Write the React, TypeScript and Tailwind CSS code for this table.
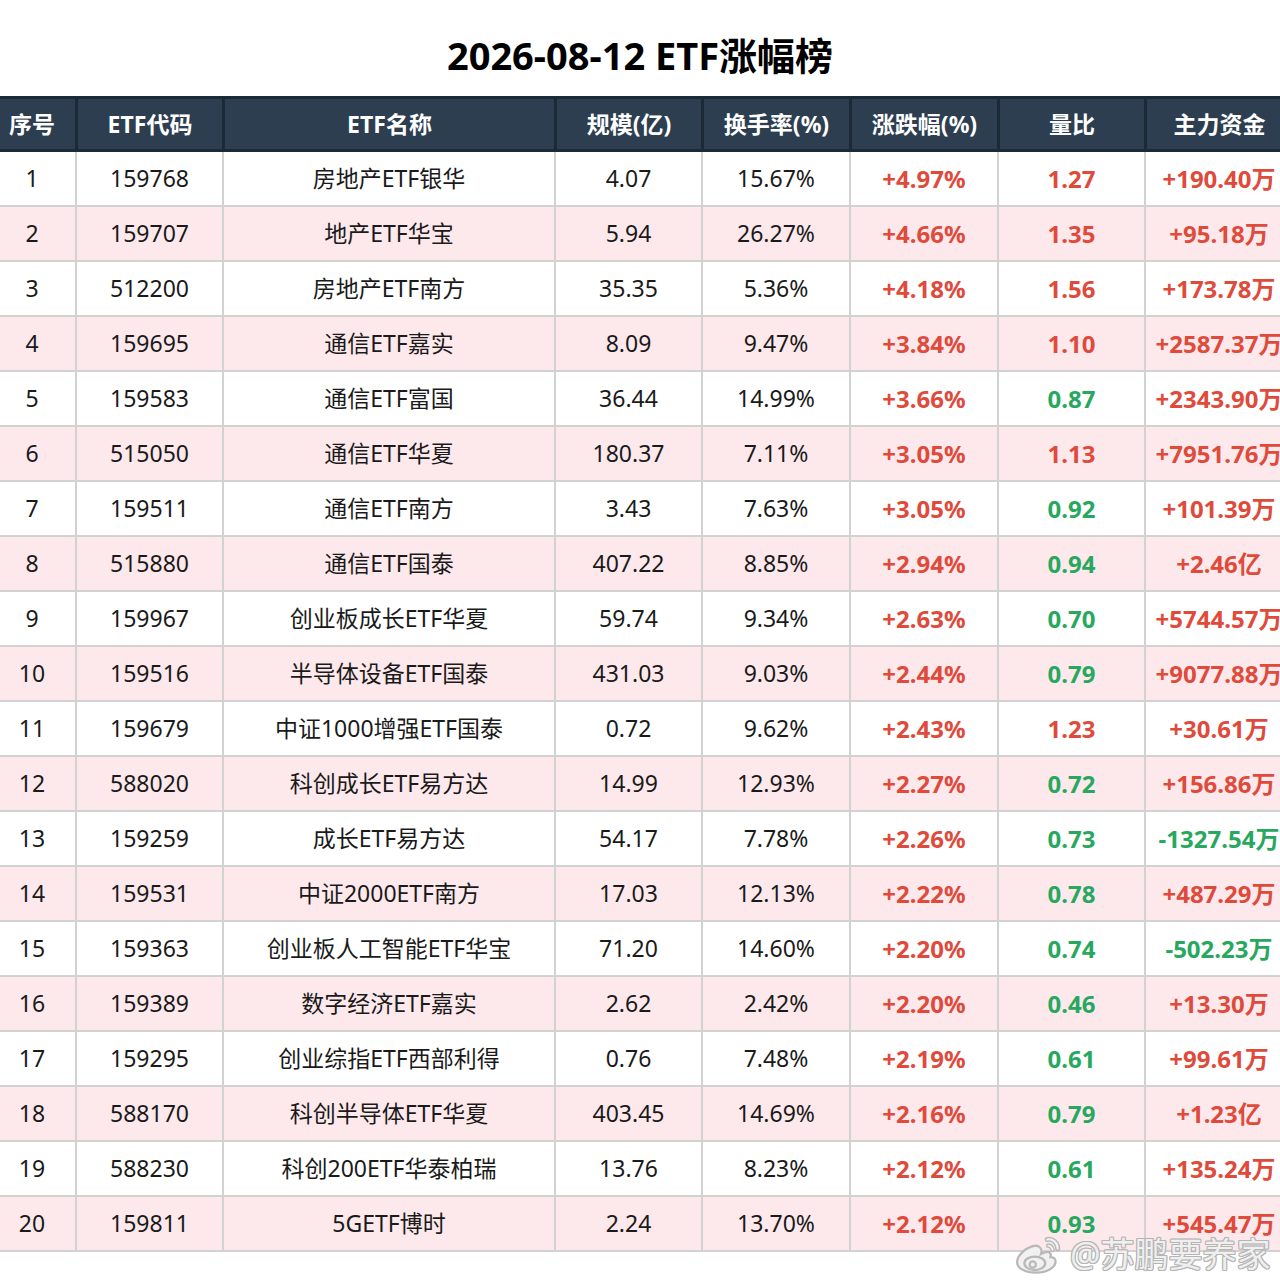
type Row = [string, string, string, string, string, string, string];

const rows: Row[] = [
  ["159768", "房地产ETF银华", "4.07", "15.67%", "+4.97%", "1.27", "+190.40万"],
  ["159707", "地产ETF华宝", "5.94", "26.27%", "+4.66%", "1.35", "+95.18万"],
  ["512200", "房地产ETF南方", "35.35", "5.36%", "+4.18%", "1.56", "+173.78万"],
  ["159695", "通信ETF嘉实", "8.09", "9.47%", "+3.84%", "1.10", "+2587.37万"],
  ["159583", "通信ETF富国", "36.44", "14.99%", "+3.66%", "0.87", "+2343.90万"],
  ["515050", "通信ETF华夏", "180.37", "7.11%", "+3.05%", "1.13", "+7951.76万"],
  ["159511", "通信ETF南方", "3.43", "7.63%", "+3.05%", "0.92", "+101.39万"],
  ["515880", "通信ETF国泰", "407.22", "8.85%", "+2.94%", "0.94", "+2.46亿"],
  ["159967", "创业板成长ETF华夏", "59.74", "9.34%", "+2.63%", "0.70", "+5744.57万"],
  ["159516", "半导体设备ETF国泰", "431.03", "9.03%", "+2.44%", "0.79", "+9077.88万"],
  ["159679", "中证1000增强ETF国泰", "0.72", "9.62%", "+2.43%", "1.23", "+30.61万"],
  ["588020", "科创成长ETF易方达", "14.99", "12.93%", "+2.27%", "0.72", "+156.86万"],
  ["159259", "成长ETF易方达", "54.17", "7.78%", "+2.26%", "0.73", "-1327.54万"],
  ["159531", "中证2000ETF南方", "17.03", "12.13%", "+2.22%", "0.78", "+487.29万"],
  ["159363", "创业板人工智能ETF华宝", "71.20", "14.60%", "+2.20%", "0.74", "-502.23万"],
  ["159389", "数字经济ETF嘉实", "2.62", "2.42%", "+2.20%", "0.46", "+13.30万"],
  ["159295", "创业综指ETF西部利得", "0.76", "7.48%", "+2.19%", "0.61", "+99.61万"],
  ["588170", "科创半导体ETF华夏", "403.45", "14.69%", "+2.16%", "0.79", "+1.23亿"],
  ["588230", "科创200ETF华泰柏瑞", "13.76", "8.23%", "+2.12%", "0.61", "+135.24万"],
  ["159811", "5GETF博时", "2.24", "13.70%", "+2.12%", "0.93", "+545.47万"],
];

const headers = ["序号", "ETF代码", "ETF名称", "规模(亿)", "换手率(%)", "涨跌幅(%)", "量比", "主力资金"];
const widths = ["w-[86px]", "w-[147px]", "w-[332px]", "w-[147px]", "w-[148px]", "w-[148px]", "w-[147px]", "w-[148px]"];

const font = { fontFamily: '"Noto Sans", "Noto Sans CJK SC", sans-serif' };

function WeiboLogo() {
  return (
    <svg width="52" height="44" viewBox="0 0 50 40" fill="none">
      <g stroke="#b9b9b9" strokeWidth="2.2" fill="#f1f1f1">
        <path d="M20 12c-9 2-17 9-17 16 0 6 8 10 18 10 11 0 19-5 19-11 0-3-3-4-5-4 1-3 0-5-3-5-2 0-4 1-6 2 1-3 0-6-2-7-1-1-3-1-4-1z" />
        <ellipse cx="20" cy="29" rx="10" ry="6.5" />
        <circle cx="18" cy="30" r="3" />
      </g>
      <path d="M32 6c5-1 10 3 10 9" stroke="#b9b9b9" strokeWidth="5" strokeLinecap="round" fill="none" />
      <path d="M32 6c5-1 10 3 10 9" stroke="#f1f1f1" strokeWidth="2" strokeLinecap="round" fill="none" />
      <path d="M33 12c2 0 4 2 4 4" stroke="#b9b9b9" strokeWidth="4.5" strokeLinecap="round" fill="none" />
      <path d="M33 12c2 0 4 2 4 4" stroke="#f1f1f1" strokeWidth="1.8" strokeLinecap="round" fill="none" />
    </svg>
  );
}

export default function App() {
  return (
    <div className="relative h-[1288px] w-[1280px] overflow-hidden bg-white text-[#111]" style={font}>
      <div className="flex h-[96px] items-center justify-center pt-[14px] text-[38px] font-bold text-black">
        2026-08-12 ETF涨幅榜
      </div>
      <div className="-ml-[11px] w-[1303px]">
        <div className="flex h-[56px] border-y-[3px] border-[#1c2a37] bg-[#2c3e50]">
          {headers.map((h, i) => (
            <div
              key={h}
              className={`${widths[i]} flex shrink-0 items-center justify-center text-[23px] font-bold text-white ${i > 0 ? "border-l-[3px] border-[#1c2a37]" : ""}`}
            >
              {h}
            </div>
          ))}
        </div>
        {rows.map((r, idx) => {
          const cells = [String(idx + 1), ...r];
          return (
            <div
              key={r[0] + idx}
              className={`flex h-[55px] border-b-2 border-[#d2d2d2] ${idx % 2 === 1 ? "bg-[#fde9ec]" : "bg-white"}`}
            >
              {cells.map((c, i) => {
                let color = "text-[#1a1a1a]";
                let weight = "font-normal text-[23px]";
                if (i === 5) {
                  color = "text-[#e04a3b]";
                  weight = "font-bold text-[24px]";
                } else if (i === 6) {
                  color = parseFloat(c) >= 1 ? "text-[#e04a3b]" : "text-[#27a85e]";
                  weight = "font-bold text-[24px]";
                } else if (i === 7) {
                  color = c.startsWith("-") ? "text-[#27a85e]" : "text-[#e04a3b]";
                  weight = "font-bold text-[24px]";
                }
                return (
                  <div
                    key={i}
                    className={`${widths[i]} flex shrink-0 items-center justify-center whitespace-nowrap ${color} ${weight} ${i > 0 ? "border-l-2 border-[#d2d2d2]" : ""}`}
                  >
                    {c}
                  </div>
                );
              })}
            </div>
          );
        })}
      </div>
      <div className="absolute left-[1014px] top-[1232px] flex items-center gap-[4px]">
        <WeiboLogo />
        <span
          className="text-[34px] leading-none text-[#efefef]"
          style={{
            textShadow:
              "1px 0 0 #b5b5b5, -1px 0 0 #b5b5b5, 0 1px 0 #b5b5b5, 0 -1px 0 #b5b5b5, 1px 1px 0 #b5b5b5, -1px -1px 0 #b5b5b5, 1px -1px 0 #b5b5b5, -1px 1px 0 #b5b5b5",
          }}
        >
          @苏鹏要养家
        </span>
      </div>
    </div>
  );
}
